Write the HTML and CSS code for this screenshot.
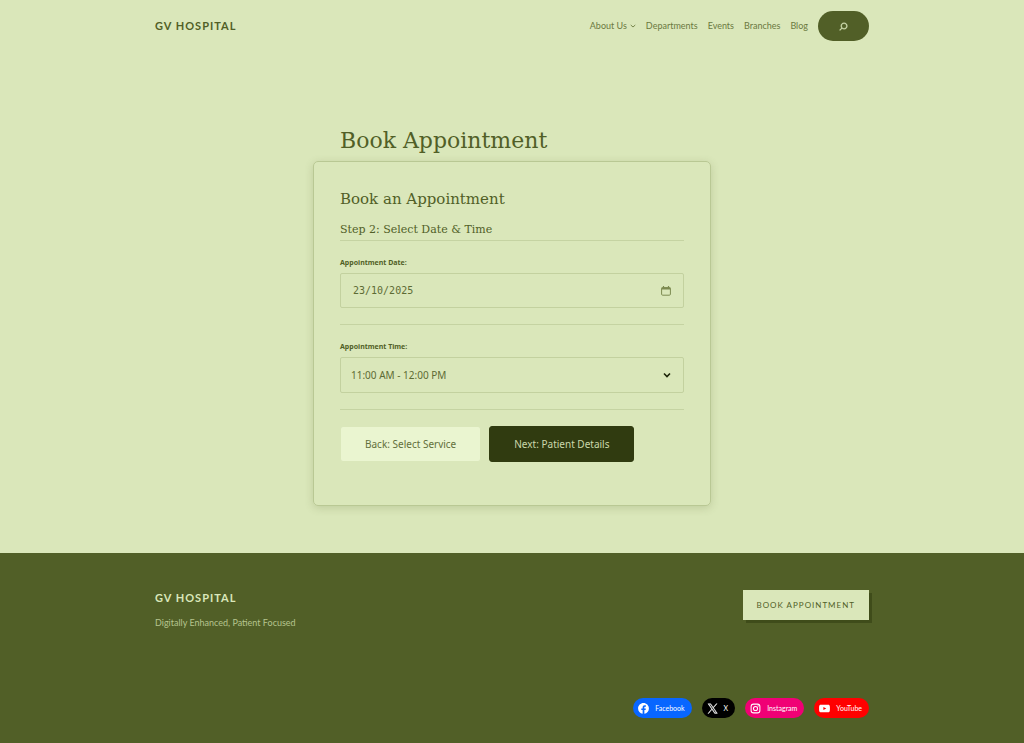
FILE: index.html
```html
<!DOCTYPE html>
<html lang="en-GB">
<head>
<meta charset="utf-8">
<meta name="viewport" content="width=device-width, initial-scale=1">
<title>Book Appointment – GV Hospital</title>
<link rel="stylesheet" href="styles.css">
</head>
<body>
<header class="site-header wrap">
  <a class="brand" href="#">GV HOSPITAL</a>
  <nav class="nav" aria-label="Main">
    <a class="nav-parent" href="#">About Us
      <svg class="caret" viewBox="0 0 12 12" aria-hidden="true"><path d="M1.500 4 6 8l4.500-4" fill="none" stroke="currentColor" stroke-width="1.800"/></svg>
    </a>
    <a href="#">Departments</a>
    <a href="#">Events</a>
    <a href="#">Branches</a>
    <a href="#">Blog</a>
    <button class="search" type="button" aria-label="Search">
      <svg viewBox="0 0 24 24" aria-hidden="true"><path d="M13 5c-3.300 0-6 2.700-6 6 0 1.400.5 2.700 1.300 3.700l-3.800 3.800 1.100 1.100 3.800-3.800c1 .8 2.300 1.300 3.700 1.300 3.300 0 6-2.700 6-6S16.300 5 13 5zm0 10.500c-2.500 0-4.500-2-4.500-4.500s2-4.500 4.500-4.500 4.500 2 4.500 4.500-2 4.500-4.500 4.500z" fill="currentColor" stroke="currentColor" stroke-width=".6"/></svg>
    </button>
  </nav>
</header>

<main class="main">
  <h1 class="page-title">Book Appointment</h1>
  <form class="card">
    <h2 class="card-title">Book an Appointment</h2>
    <h3 class="step-title">Step 2: Select Date &amp; Time</h3>
    <div class="field">
      <label for="date">Appointment Date:</label>
      <div class="control date-control">
        <input id="date" type="text" value="23/10/2025">
        <button class="picker" type="button" aria-label="Open calendar">
          <svg viewBox="0 0 10 10" aria-hidden="true"><path d="M2.500 0v2M7.500 0v2" stroke="currentColor" stroke-width="1.200"/><rect x=".6" y="1.600" width="8.800" height="7.600" rx="1" fill="none" stroke="currentColor"/><path d="M.6 1.500h8.800v2H.6z" fill="currentColor"/></svg>
        </button>
      </div>
    </div>
    <div class="field">
      <label for="time">Appointment Time:</label>
      <div class="control select-control">
        <select id="time"><option>11:00 AM - 12:00 PM</option></select>
        <svg class="arrow" viewBox="0 0 8 8" aria-hidden="true"><path d="m1 2.500 3 3 3-3" fill="none" stroke="currentColor" stroke-width="1.600"/></svg>
      </div>
    </div>
    <div class="actions">
      <button class="btn btn-back" type="button">Back: Select Service</button>
      <button class="btn btn-next" type="submit">Next: Patient Details</button>
    </div>
  </form>
</main>

<footer class="site-footer">
  <div class="wrap footer-inner">
    <div class="footer-top">
      <div>
        <a class="brand" href="#">GV HOSPITAL</a>
        <p class="tagline">Digitally Enhanced, Patient Focused</p>
      </div>
      <a class="cta" href="#">BOOK APPOINTMENT</a>
    </div>
    <div class="social">
      <a class="facebook" href="#"><svg viewBox="0 0 24 24" aria-hidden="true"><path d="M12 2C6.500 2 2 6.500 2 12c0 5 3.700 9.100 8.400 9.900v-7H7.900V12h2.500V9.800c0-2.500 1.500-3.900 3.800-3.900 1.100 0 2.200.2 2.200.2v2.500h-1.300c-1.200 0-1.600.8-1.600 1.600V12h2.800l-.4 2.900h-2.300v7C18.300 21.100 22 17 22 12c0-5.500-4.500-10-10-10z" fill="currentColor"/></svg>Facebook</a>
      <a class="x" href="#"><svg viewBox="0 0 24 24" aria-hidden="true"><path d="M13.982 10.622 20.540 3h-1.554l-5.693 6.618L8.745 3H3.500l6.876 10.007L3.500 21h1.554l6.012-6.989L15.868 21h5.245l-7.131-10.378Zm-2.128 2.474-.697-.997-5.543-7.930H8l4.474 6.400.697.996 5.815 8.318h-2.387l-4.745-6.787Z" fill="currentColor" stroke="currentColor" stroke-width=".6"/></svg>X</a>
      <a class="instagram" href="#"><svg viewBox="0 0 24 24" aria-hidden="true"><rect x="3.900" y="3.900" width="16.200" height="16.200" rx="4.500" fill="none" stroke="currentColor" stroke-width="1.900"/><circle cx="12" cy="12" r="3.800" fill="none" stroke="currentColor" stroke-width="1.900"/><circle cx="16.800" cy="7.200" r="1.200" fill="currentColor"/></svg>Instagram</a>
      <a class="youtube" href="#"><svg viewBox="0 0 24 24" aria-hidden="true"><path d="M21.800 8s-.2-1.400-.8-2c-.8-.8-1.600-.8-2-.9C16.200 5 12 5 12 5s-4.200 0-7 .1c-.4.1-1.200.1-2 .9-.6.6-.8 2-.8 2S2 9.600 2 11.300v1.500c0 1.600.2 3.200.2 3.200s.2 1.400.8 2c.8.8 1.800.8 2.200.8 1.600.2 6.800.2 6.800.2s4.200 0 7-.2c.4 0 1.200 0 2-.8.6-.6.8-2 .8-2s.2-1.600.2-3.200v-1.500C22 9.600 21.800 8 21.800 8zM9.900 14.600V9l5.400 2.800-5.400 2.800z" fill="currentColor"/></svg>YouTube</a>
    </div>
  </div>
</footer>
</body>
</html>
```
FILE: styles.css
```css
* { box-sizing: border-box; }

body {
  margin: 0;
  min-height: 100vh;
  display: flex;
  flex-direction: column;
  background: #dae7ba;
  color: #515f27;
  font: 9px/16px Lato, sans-serif;
}

a { color: inherit; text-decoration: none; }
button { cursor: pointer; }

.wrap { width: 100%; max-width: 746px; margin: 0 auto; padding: 0 16px; }

.site-header {
  display: flex;
  align-items: center;
  justify-content: space-between;
  padding-top: 11px;
  padding-bottom: 11px;
}

.brand { font-size: 11px; font-weight: 700; letter-spacing: 1px; }

.nav { display: flex; align-items: center; gap: 10px; color: #6b793f; }
.nav-parent { display: flex; align-items: center; gap: 3px; }
.caret { width: 6px; height: 6px; }

.search {
  display: grid;
  place-items: center;
  width: 51px;
  height: 30px;
  padding: 0;
  border: 0;
  border-radius: 15px;
  background: #515f27;
  color: #dae7ba;
}
.search svg { width: 13px; height: 13px; }

.main {
  flex: 1;
  width: 100%;
  max-width: 398px;
  margin: 0 auto;
  padding: 73px 0 47px;
}

h1, h2, h3 { margin: 0; font-family: "DejaVu Serif", serif; font-weight: 400; }

.page-title { padding: 0 27px; font-size: 22px; line-height: 32px; margin-bottom: 4px; }

.card {
  padding: 26px 26px 43px;
  border: 1px solid #b9c894;
  border-radius: 5px;
  box-shadow: 0 2px 8px rgba(81, 95, 39, 0.2);
}
.card-title { font-size: 15px; line-height: 22px; margin-bottom: 11px; }
.step-title {
  padding-bottom: 1px;
  border-bottom: 1px solid #c5d3a2;
  font-size: 11px;
  line-height: 18px;
}

.field { padding: 16px 0; border-bottom: 1px solid #c5d3a2; }
.field label {
  display: block;
  margin-bottom: 4px;
  font: 700 7px/12px "Noto Sans", sans-serif;
}

.control { display: flex; align-items: center; border: 1px solid #c3d19f; border-radius: 2px; }
.control input,
.control select {
  flex: 1;
  min-width: 0;
  border: 0;
  background: none;
  color: #5d6b34;
}
.date-control { height: 35px; padding: 0 12px; }
.date-control input { padding: 0; font: 10px/16px "DejaVu Sans Mono", monospace; }
.picker { display: flex; padding: 0; border: 0; background: none; color: #7c8a50; }
.picker svg { width: 10px; height: 10px; }

.select-control { position: relative; height: 36px; }
.select-control select {
  height: 100%;
  padding: 0 24px 0 10px;
  appearance: none;
  font: 10px/16px "Noto Sans", sans-serif;
}
.arrow { position: absolute; right: 12px; width: 8px; height: 8px; color: #1c2408; pointer-events: none; }

.actions { display: flex; flex-wrap: wrap; gap: 8px; padding-top: 16px; }
.btn {
  height: 36px;
  padding: 0 24px;
  border: 1px solid #dae7ba;
  border-radius: 3px;
  font: 10px/16px "Noto Sans", sans-serif;
}
.btn-back { background: #eaf5d0; color: #626f3b; }
.btn-next { background: #303b10; border-color: #303b10; color: #cbd8ab; }

.site-footer { background: #515f27; color: #dae7ba; }
.footer-inner { padding-top: 37px; padding-bottom: 26px; }
.footer-top { display: flex; justify-content: space-between; align-items: flex-start; margin-bottom: 67px; }
.tagline { margin: 8px 0 0; color: #b5c48e; }

.cta {
  padding: 7px 14px;
  background: #dae7ba;
  color: #515f27;
  font-size: 8px;
  letter-spacing: 1px;
  box-shadow: 3px 3px 0 #3f4c1a;
}

.social { display: flex; flex-wrap: wrap; justify-content: flex-end; gap: 10px; }
.social a {
  display: flex;
  align-items: center;
  gap: 5px;
  padding: 2px 7px 2px 4px;
  border-radius: 10px;
  color: #fff;
  font-size: 7px;
  line-height: 16px;
}
.social svg { width: 13px; height: 13px; }
.social .facebook { background: #0866ff; }
.social .x { background: #000; }
.social .instagram { background: #f00075; }
.social .youtube { background: #f00; }
```
